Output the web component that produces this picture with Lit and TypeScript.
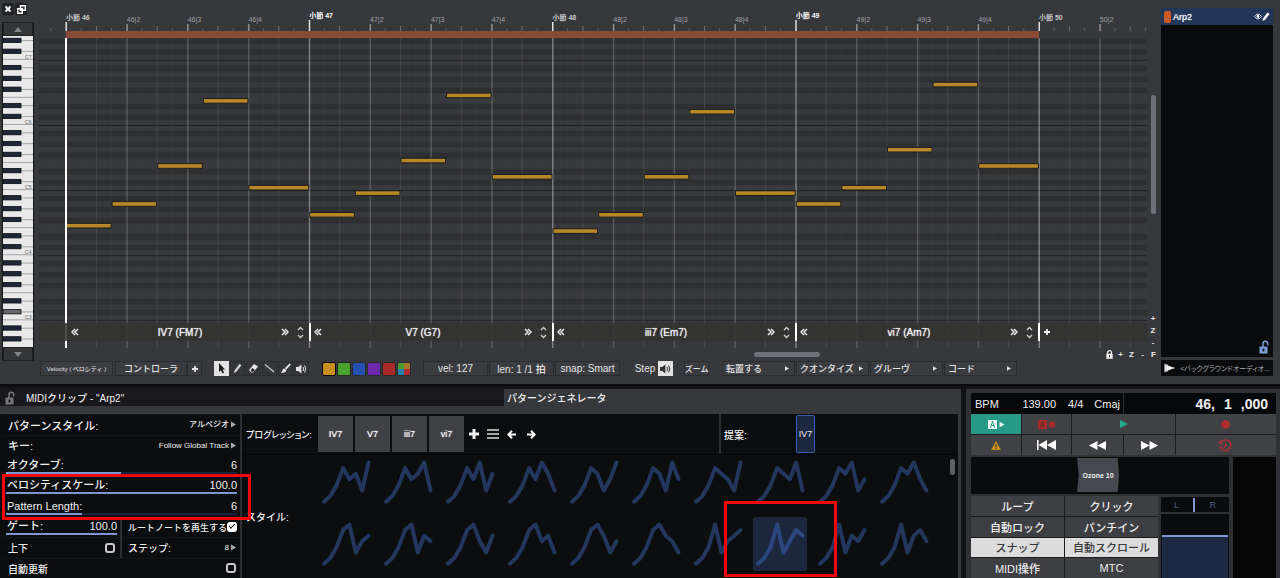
import { LitElement, html, svg, css, nothing } from "lit";
import { customElement, property, state } from "lit/decorators.js";
import { classMap } from "lit/directives/class-map.js";

const BEAT = 243.25 / 4;
const SIXTEENTH = BEAT / 4;
const BAR_X = 27;
const SEMI = 65.12 / 12;
const C5_BOTTOM = 190.6;
const BLACK = [1, 3, 6, 8, 10];
const isBlack = (n: number) => BLACK.includes(((n % 12) + 12) % 12);
const rowTop = (n: number) => C5_BOTTOM - (n + 1) * SEMI;

// Pitches are semitones relative to C5, five notes per bar.
const BARS = [
  [-7, -3, 4, 16, 0],
  [-5, -1, 5, 17, 2],
  [-8, -5, 2, 14, -1],
  [-3, 0, 7, 19, 4],
];
const CHORDS = ["IV7 (FM7)", "V7 (G7)", "iii7 (Em7)", "vi7 (Am7)"];

const STYLES = [
  "01364527", "01364572", "01364725", "01364752", "01365247",
  "01365274", "01365427", "01365472", "01365724", "01365742",
  "01367245", "01367254", "01367425", "01367452", "01367524",
  "01367542", "01372456", "01372465", "01372546", "01372564",
];

const base = css`
  :host { display: block; box-sizing: border-box; }
  *, *::before, *::after { box-sizing: border-box; }
  button, input, select {
    font: inherit; color: inherit; margin: 0; padding: 0; border: 0;
    border-radius: 0; background: none; appearance: none; outline: none;
  }
  button { display: flex; align-items: center; justify-content: center; white-space: nowrap; }
  svg { display: block; flex: none; }
`;

const openLock = (w: number, h: number) => html`<svg width=${w} height=${h} viewBox="0 0 10 14" aria-hidden="true">
  <path d="M4 7V3.6A2.3 2.3 0 0 1 8.7 3.6V5.2" fill="none" stroke="currentColor" stroke-width="1.5"/>
  <rect x="0.5" y="6.5" width="8" height="7" fill="currentColor"/>
  <rect x="3.6" y="8.6" width="1.8" height="2.8" fill="#0b0d0e"/></svg>`;
const triangle = html`<svg width="6" height="7" viewBox="0 0 6 7" aria-hidden="true"><path d="M0 0L6 3.5L0 7Z" fill="currentColor"/></svg>`;
const speaker = html`<svg width="11" height="10" viewBox="0 0 11 10" aria-hidden="true">
  <path d="M0 3H2.2L5.4 0.4V9.6L2.2 7H0Z" fill="currentColor"/>
  <path d="M7 3Q8.2 5 7 7M8.6 1.5Q10.8 5 8.6 8.5" fill="none" stroke="currentColor" stroke-width="1"/></svg>`;
const chevrons = (flip: boolean) => html`<svg width="8" height="8" viewBox="0 0 8 8" aria-hidden="true">
  <path d=${flip ? "M1 1L4 4L1 7M4 1L7 4L4 7" : "M4 1L1 4L4 7M7 1L4 4L7 7"} fill="none" stroke="#e8e8e8" stroke-width="1.5"/></svg>`;
const plus = (s: number) => html`<svg width=${s} height=${s} viewBox="0 0 10 10" aria-hidden="true"><path d="M5 0V10M0 5H10" stroke="currentColor" stroke-width="3"/></svg>`;

@customElement("piano-keys")
class PianoKeys extends LitElement {
  static styles = [base, css`
    :host { display: flex; flex-direction: column; background: #18191b; padding: 0 1px; }
    button { height: 14px; width: 100%; background: #343537; color: #85868a; border: 1px solid #1e1f20; }
    .name { font-size: 5px; fill: #666; }
    .keys { width: 100%; height: 311px; background: #e9e9ea; }
  `];
  render() {
    const keys = Array.from({ length: 62 }, (_, i) => i - 30);
    return html`
      <button aria-label="Scroll up"><svg width="8" height="5"><path d="M0 5L4 0L8 5Z" fill="currentColor"/></svg></button>
      <svg class="keys" aria-label="Keyboard"><g transform="translate(0,-37)">
        ${keys.map((n) => {
          const y = rowTop(n);
          const m = ((n % 12) + 12) % 12;
          return isBlack(n)
            ? svg`<rect x="0" y=${y + SEMI / 2 - 0.3} width="31" height="1" fill="#a5a5aa"/>
                <rect x="0" y=${y + 0.6} width="18" height="4.3" fill=${n === -23 ? "#66676a" : "#1f2638"} stroke="#0b0d12" stroke-width="0.8"/>`
            : m === 0 || m === 5
              ? svg`<rect x="0" y=${y + SEMI - 0.5} width="31" height="1" fill="#a5a5aa"/>
                ${m === 0 ? svg`<text class="name" x="22" y=${y + 4.6}>C${5 + n / 12}</text>` : nothing}`
              : nothing;
        })}
      </g></svg>
      <button aria-label="Scroll down"><svg width="8" height="5"><path d="M0 0L4 5L8 0Z" fill="currentColor"/></svg></button>`;
  }
}

@customElement("piano-roll")
class PianoRoll extends LitElement {
  static styles = [base, css`
    :host { position: relative; overflow: hidden; height: 348px; min-width: 0; }
    .canvas { width: 100%; height: 100%; }
    .bar { font-size: 7px; font-weight: 700; fill: #c9c9cb; }
    .bar.major { fill: #fff; }
    .beat { font-size: 7px; fill: #a0a1a5; }
    .strip {
      position: absolute; left: 0; right: 0; bottom: 7px; height: 18px; padding-left: 29px;
      display: flex; background: rgba(51, 51, 49, 0.85); color: #ededee; font-size: 10px;
    }
    .chord { width: 243px; display: flex; align-items: center; padding: 0 5px 0 3px; border-right: 2px solid #fff; }
    .chord span { flex: 1; text-align: center; text-shadow: 0 0 1px #fff; }
    .chord .step { margin-left: 8px; }
    .add { padding-left: 4px; }
  `];
  render() {
    const rows = Array.from({ length: 54 }, (_, i) => i - 24);
    const ticks = Array.from({ length: 74 }, (_, i) => i - 1);
    return html`
      <svg class="canvas" aria-label="Piano roll">
        <defs><clipPath id="area"><rect x="0" y="38" width="100%" height="283"/></clipPath></defs>
        <g clip-path="url(#area)">
          <rect y="38" width="100%" height="283" fill="#38393c"/>
          ${rows.map((n) => isBlack(n)
            ? svg`<rect y=${rowTop(n)} width="100%" height=${SEMI} fill="#2e2f31"/>`
            : n % 12 === 0
              ? svg`<rect y=${rowTop(n) + SEMI - 0.5} width="100%" height="1" fill="#1f2022"/>` : nothing)}
        </g>
        ${ticks.map((t) => {
          const x = BAR_X + t * SIXTEENTH;
          const bar = t % 16 === 0 && t <= 64;
          const beat = t % 4 === 0;
          const eighth = t % 2 === 0;
          const o = bar ? 0.36 : beat ? 0.18 : eighth ? 0.09 : 0.025;
          const top = bar ? (t % 32 ? 20 : 22) : beat ? 24 : eighth ? 26 : 28;
          return svg`
            <rect x=${x - 0.5} y="38" width=${beat ? 1.5 : 1} height="310" fill="#fff" opacity=${o}/>
            <rect x=${x - 0.5} y=${top} width=${beat ? 1.5 : 1} height=${31 - top} fill="#fff" opacity=${bar ? 0.85 : beat ? 0.45 : eighth ? 0.28 : 0.18}/>
            ${bar ? svg`<text class=${"bar" + (t % 32 ? " major" : "")} x=${x} y=${t % 32 ? 18 : 20}>小節 ${46 + t / 16}</text>`
              : beat && t < 72 ? svg`<text class="beat" x=${x} y="22">${46 + Math.floor(t / 16)}|${(t % 16) / 4 + 1}</text>` : nothing}`;
        })}
        <rect x=${BAR_X} y="31" width=${BEAT * 16} height="7" fill="#8a4a35"/>
        ${BARS.map((notes, b) => notes.map((n, i) => svg`
          <rect x=${BAR_X + (b * 16 + i * 3) * SIXTEENTH + 0.5} y=${rowTop(n) + 0.2}
            width=${(i === 4 ? 4 : 3) * SIXTEENTH - 1} height="4.6" fill="#b88827" stroke="#1c1d20" stroke-width="1"/>`))}
        <rect x="26" y="38" width="2" height="310" fill="#fff"/>
      </svg>
      <div class="strip">
        ${CHORDS.map((c) => html`<div class="chord">
          <button aria-label="Previous inversion">${chevrons(false)}</button>
          <span>${c}</span>
          <button aria-label="Next inversion">${chevrons(true)}</button>
          <button class="step" aria-label="Octave"><svg width="7" height="13" viewBox="0 0 7 13"><path d="M1 4L3.5 1.5L6 4M1 9L3.5 11.5L6 9" fill="none" stroke="#d0d0d0" stroke-width="1.3"/></svg></button>
        </div>`)}
        <button class="add" aria-label="Add chord">${plus(6)}</button>
      </div>`;
  }
}

const TOOLS = [
  { name: "Select", art: svg`<path d="M3 0V9L5 7.2L6.4 10.5L8 9.8L6.6 6.6H9Z" fill="#17181a"/>` },
  { name: "Draw", art: svg`<path d="M2 10L2.6 7.4L7.6 0.8L9.4 2.2L4.4 8.8Z" fill="#d5d5d7"/>` },
  { name: "Erase", art: svg`<path d="M1 7L6 1L10 3.6L5 9.6H3Z" fill="#e4e4e6"/><path d="M2.6 7.2L4.4 5L7 7L5 9H3.6Z" fill="#333437"/>` },
  { name: "Line", art: svg`<path d="M1 1.5L10 9" stroke="#c8c8ca" stroke-width="1.3"/>` },
  { name: "Paint", art: svg`<path d="M9.6 0.4L10.8 1.6L6.6 6.6L4.8 5.2Z" fill="#e4e4e6"/><path d="M4.4 5.4L6.4 7.2Q5.6 10.2 0.6 9.8Q2.4 8.8 2.4 7.2Q2.8 5.6 4.4 5.4Z" fill="#e4e4e6"/>` },
];
const SWATCHES = ["orange", "green", "blue", "purple", "red", "multi"];

@customElement("roll-toolbar")
class RollToolbar extends LitElement {
  @state() private tool = 0;
  @state() private color = 0;
  static styles = [base, css`
    :host { display: flex; align-items: stretch; height: 15px; font-size: 9px; font-weight: 500; color: #e2e2e4; padding-left: 38px; gap: 2px; }
    button { background: #3b3c3f; border: 1px solid #2c2d30; }
    .velocity { width: 73px; font-size: 6px; }
    .controller { width: 72px; }
    .plus { width: 15px; margin-left: -2px; }
    .group { display: flex; gap: 1px; }
    .tools { margin-left: 10px; }
    .tool { width: 15px; background: #35363a; }
    .tool.on { background: #e2e2e2; color: #333; border-color: #e2e2e2; }
    .colors { margin-left: 11px; align-items: center; }
    .swatch { width: 14px; height: 14px; border-radius: 2px; border: 1px solid #2a2b2d; }
    .swatch.on { border: 1px solid #000; }
    .orange { background: #c98d22; } .green { background: #47a52e; } .blue { background: #2551ae; }
    .purple { background: #6d28ab; } .red { background: #a92828; }
    .multi { background: conic-gradient(#a8762c 25%, #b12b2b 0 50%, #2a7fae 0 75%, #4c9d30 0); }
    .fields { margin-left: 10px; font-size: 10px; }
    .field { width: 65px; }
    .stepbox { margin-left: 10px; font-size: 10px; gap: 0; }
    .step { width: 26px; border: 0; background: none; }
    .zoom { margin-left: 9px; width: 25px; font-size: 8px; }
    .menus { margin-left: 11px; }
    .menu { width: 73px; justify-content: space-between; padding: 0 5px 0 3px; }
    .menu svg { width: 4px; height: 5px; }
    .controller, .velocity, .field { flex: none; }
  `];
  render() {
    return html`
      <button class="velocity">Velocity ( ベロシティ )</button>
      <button class="controller">コントローラ</button>
      <button class="plus" aria-label="Add controller">${plus(6)}</button>
      <div class="group tools">
        ${TOOLS.map((t, i) => html`<button class=${classMap({ tool: true, on: this.tool === i })} aria-label=${t.name}
          @click=${() => (this.tool = i)}><svg width="11" height="11">${t.art}</svg></button>`)}
        <button class="tool" aria-label="Audition">${speaker}</button>
      </div>
      <div class="group colors">
        ${SWATCHES.map((s, i) => html`<button class=${classMap({ swatch: true, [s]: true, on: this.color === i })}
          aria-label=${s} @click=${() => (this.color = i)}></button>`)}
      </div>
      <div class="group fields">
        <button class="field">vel: 127</button>
        <button class="field">len: 1 /1 拍</button>
        <button class="field">snap: Smart</button>
      </div>
      <div class="group stepbox">
        <button class="step">Step</button>
        <button class="tool on" aria-label="Step sound">${speaker}</button>
      </div>
      <button class="zoom">ズーム</button>
      <div class="group menus">
        ${["転置する", "クオンタイズ", "グルーヴ", "コード"].map((m) => html`<button class="menu">${m}${triangle}</button>`)}
      </div>`;
  }
}

@customElement("note-editor")
class NoteEditor extends LitElement {
  static styles = [base, css`
    :host {
      display: grid; grid-template-columns: minmax(0, 1fr) 112px; gap: 0 2px;
      padding: 0 7px 8px 2px; background: #37383b; border-bottom: 2px solid #0b0b0e; border-top: 1px solid #46474a;
      margin-top: -1px; color: #eee;
    }
    .main { display: grid; grid-template-columns: 32px minmax(0, 1fr) 12px; grid-template-rows: 348px 13px 15px; }
    .left { grid-row: 1 / 3; display: flex; flex-direction: column; }
    .window { height: 23px; display: flex; gap: 1px; padding: 3px 0 7px; }
    .window button { width: 12px; background: #222325; border-radius: 2px; }
    piano-keys { flex: 1; }
    piano-roll { margin-left: 5px; }
    .vertical { display: flex; flex-direction: column; align-items: center; padding-top: 95px; font-size: 8px; font-weight: 700; }
    .thumb { width: 5px; height: 119px; border-radius: 3px; background: #707178; margin-bottom: auto; }
    .vertical button, .horizontal button { height: 12px; min-width: 11px; }
    .horizontal { grid-column: 2 / 4; display: flex; align-items: center; font-size: 8px; font-weight: 700; }
    .hthumb { margin-left: auto; margin-right: 284px; width: 66px; height: 5px; border-radius: 3px; background: #707178; }
    roll-toolbar { grid-column: 1 / 4; }
    .side { padding-top: 8px; display: flex; flex-direction: column; gap: 3px; }
    .tracks { flex: 1; background: #0a0b0d; display: flex; flex-direction: column; }
    .track { height: 17px; background: #223659; display: flex; align-items: center; padding: 0 3px; font-size: 9px; text-shadow: 0 0 1px #fff; }
    .chip { width: 7px; height: 12px; border-radius: 2px; background: #cc5a24; margin-right: 2px; }
    .track .eye { margin-left: auto; }
    .lock { margin: auto 4px 3px auto; color: #7e9ad8; }
    .audio { height: 16px; background: #0a0b0d; color: #aaaaac; font-size: 7px; font-feature-settings: "palt"; display: flex; align-items: center; gap: 5px; padding: 0 3px; white-space: nowrap; }
    .audio span { margin-left: auto; }
  `];
  render() {
    return html`
      <div class="main">
        <div class="left">
          <div class="window">
            <button aria-label="Close"><svg width="8" height="8"><path d="M1.5 1.5L6.5 6.5M6.5 1.5L1.5 6.5" stroke="#fff" stroke-width="2"/></svg></button>
            <button aria-label="Detach"><svg width="9" height="9"><path d="M3.5 0.7H8.3V5.3H3.5ZM0.7 3.7H5.3V8.3H0.7Z" fill="#333" stroke="#fff" stroke-width="1.4"/></svg></button>
          </div>
          <piano-keys></piano-keys>
        </div>
        <piano-roll></piano-roll>
        <div class="vertical">
          <div class="thumb"></div>
          <button>+</button><button>Z</button><button>-</button>
        </div>
        <div class="horizontal">
          <div class="hthumb"></div>
          <button aria-label="Lock zoom"><svg width="7" height="9"><path d="M1.6 4V2.6A1.9 1.9 0 0 1 5.4 2.6V4" fill="none" stroke="#eee" stroke-width="1.2"/><rect x="0.3" y="3.8" width="6.4" height="5" fill="#eee"/><rect x="3" y="5.3" width="1" height="2" fill="#333"/></svg></button>
          <button>+</button><button>Z</button><button>-</button><button>F</button>
        </div>
        <roll-toolbar></roll-toolbar>
      </div>
      <aside class="side">
        <div class="tracks">
          <div class="track"><i class="chip"></i>Arp2
            <svg class="eye" width="8" height="7" viewBox="0 0 8 7"><path d="M0.4 3.5Q4 -1.4 7.6 3.5Q4 8.4 0.4 3.5Z" fill="none" stroke="#fff" stroke-width="0.8"/><circle cx="4" cy="3.5" r="1.4" fill="#fff"/></svg>
            <svg width="8" height="9" viewBox="0 0 8 9"><path d="M0.5 8.7L1 6.4L5.5 0.6L7.6 2L3 8Z" fill="#fff"/></svg>
          </div>
          <button class="lock" aria-label="Unlock tracks">${openLock(10, 14)}</button>
        </div>
        <div class="audio">
          <svg width="11" height="10" viewBox="0 0 10 10"><path d="M0 0L0.8 2L1.4 0.5L2.2 2L3 1.2L3.6 3L4.4 2.2L5 3.4L5.8 3L7 4L10 4.6V5.4L7 6L5.8 7L5 6.6L4.4 7.8L3.6 7L3 8.8L2.2 8L1.4 9.5L0.8 8L0 10Z" fill="#eee"/></svg>
          <span>&lt;バックグラウンドオーディオ...</span>
        </div>
      </aside>`;
  }
}

@customElement("slider-row")
class SliderRow extends LitElement {
  @property() label = "";
  @property() text = "";
  @property({ type: Number }) value = 50;
  static styles = [base, css`
    :host { display: flex; flex-direction: column; justify-content: flex-end; padding-bottom: 2px; }
    .line { display: flex; justify-content: space-between; align-items: center; line-height: 14px; white-space: nowrap; }
    .line label { padding-left: 1px; }
    input { width: 100%; height: 2px; display: block; background: linear-gradient(to right, #7e97d2 var(--fill), #16233c 0); }
    input::-webkit-slider-thumb { appearance: none; width: 1px; height: 2px; }
  `];
  render() {
    return html`
      <div class="line"><label for="range">${this.label}</label><output for="range">${this.text}</output></div>
      <input id="range" type="range" .value=${String(this.value)} style=${`--fill:${this.value}%`}>`;
  }
}

@customElement("pattern-settings")
class PatternSettings extends LitElement {
  static styles = [base, css`
    :host { display: grid; grid-template-rows: repeat(8, 1fr); font-size: 11px; font-weight: 500; position: relative; min-height: 164px; }
    .row { display: flex; align-items: center; padding: 0 4px 0 6px; border-top: 1px solid #131517; min-width: 0; white-space: nowrap; }
    .row label { flex: 1; }
    select { text-align-last: right; font-size: 8px; margin-right: 2px; height: 12px; }
    .row svg { color: #a9aaac; width: 5px; }
    slider-row { margin: 0 3px 0 4px; }
    .pair { display: grid; grid-template-columns: 118px 2px 1fr; }
    .pair slider-row { margin-right: 3px; }
    .pair .row { padding-right: 5px; }
    .pair .rule { background: #2d2e31; }
    .pair .right { padding: 0 4px 0 6px; }
    .small { font-size: 9px; }
    .stepname { font-size: 10px; }
    input[type="checkbox"] { width: 10px; height: 10px; border: 2px solid #c9c9cb; border-radius: 3px; position: relative; flex: none; }
    input[type="checkbox"]:checked { background: #fff; border-color: #fff; }
    input[type="checkbox"]:checked::after {
      content: ""; position: absolute; left: 0; top: 0; width: 6px; height: 3px;
      border-left: 1px solid #111; border-bottom: 1px solid #111; transform: rotate(-45deg);
    }
    .mark { grid-column: 1; grid-row: 4 / 6; position: absolute; inset: -2px -11px -3px 0; border: 3px solid #f00808; pointer-events: none; z-index: 2; }
  `];
  render() {
    return html`
      <div class="row"><label for="style">パターンスタイル:</label><select id="style"><option>アルペジオ</option></select>${triangle}</div>
      <div class="row"><label for="key">キー:</label><select id="key"><option>Follow Global Track</option></select>${triangle}</div>
      <slider-row label="オクターブ:" text="6" .value=${50}></slider-row>
      <slider-row label="ベロシティスケール:" text="100.0" .value=${100}></slider-row>
      <slider-row label="Pattern Length:" text="6" .value=${33}></slider-row>
      <div class="pair">
        <slider-row label="ゲート:" text="100.0" .value=${100}></slider-row>
        <i class="rule"></i>
        <div class="row right small"><label for="root">ルートノートを再生する</label><input id="root" type="checkbox" checked></div>
      </div>
      <div class="pair">
        <div class="row stepname"><label for="updown">上下</label><input id="updown" type="checkbox"></div>
        <i class="rule"></i>
        <div class="row right stepname"><label for="step">ステップ:</label><select id="step"><option>8</option></select>${triangle}</div>
      </div>
      <div class="row stepname"><label for="auto">自動更新</label><input id="auto" type="checkbox"></div>
      <div class="mark"></div>`;
  }
}

@customElement("pattern-browser")
class PatternBrowser extends LitElement {
  @state() private selected = 17;
  static styles = [base, css`
    :host { display: grid; grid-template-rows: 41px 1fr; border-left: 2px solid #2d2e31; border-right: 3px solid #37383b; font-weight: 500; }
    .top { display: flex; border-bottom: 1px solid #050606; }
    .progression { width: 477px; display: flex; align-items: center; padding-left: 4px; }
    .caption { width: 72px; font-size: 9px; white-space: nowrap; font-feature-settings: "palt"; }
    .chords { display: flex; gap: 2px; }
    .chord { width: 35px; height: 36px; background: #404145; font-size: 9px; text-shadow: 0 0 1px #fff; }
    .icon { width: 19px; height: 20px; }
    .suggest { flex: 1; display: flex; align-items: center; border-left: 2px solid #2d2e31; padding-left: 3px; font-size: 10px; }
    .suggest span { width: 72px; }
    .pick { width: 19px; height: 38px; background: #1c2740; border: 1px solid #3a5fa8; border-radius: 2px; font-size: 9px; }
    .styles { display: grid; grid-template-columns: 77px 1fr 8px; min-height: 0; }
    .name { font-size: 10px; padding-left: 4px; align-self: center; }
    .grid { display: grid; grid-template-columns: repeat(auto-fill, 54px); grid-auto-rows: 54px; gap: 8px; align-content: start; }
    .cell { border-radius: 3px; position: relative; }
    .cell.on { background: #1c273d; }
    .curve { fill: none; stroke: #22365e; stroke-width: 4; stroke-linecap: round; stroke-linejoin: round; }
    .on .curve { stroke: #2c477e; }
    .mark { position: absolute; inset: -16px -30px -6px -29px; border: 3px solid #f00808; z-index: 2; pointer-events: none; }
    .bar { width: 5px; height: 16px; margin-top: 4px; border-radius: 3px; background: #606166; }
  `];
  render() {
    return html`
      <div class="top">
        <div class="progression">
          <span class="caption">プログレッション:</span>
          <div class="chords">${["IV7", "V7", "iii7", "vi7"].map((c) => html`<button class="chord">${c}</button>`)}</div>
          <button class="icon" aria-label="Add">${plus(10)}</button>
          <button class="icon" aria-label="Menu"><svg width="12" height="10"><path d="M0 1H12M0 5H12M0 9H12" stroke="#ddd" stroke-width="1.6"/></svg></button>
          <button class="icon" aria-label="Back"><svg width="10" height="9"><path d="M5 0.8L1.4 4.5L5 8.2M1.4 4.5H9" fill="none" stroke="#fff" stroke-width="2"/></svg></button>
          <button class="icon" aria-label="Forward"><svg width="10" height="9"><path d="M5 0.8L8.6 4.5L5 8.2M8.6 4.5H1" fill="none" stroke="#fff" stroke-width="2"/></svg></button>
        </div>
        <div class="suggest"><span>提案:</span><button class="pick">IV7</button></div>
      </div>
      <div class="styles">
        <span class="name">スタイル:</span>
        <div class="grid">
          ${STYLES.map((s, i) => html`<button class=${classMap({ cell: true, on: i === this.selected })} aria-label=${`Style ${i + 1}`}
            @click=${() => (this.selected = i)}>
            <svg width="54" height="54"><polyline class="curve" points=${[...s].map((l, k) => `${5 + k * 6.36},${46.7 - Number(l) * 5.6}`).join(" ")}/></svg>
            ${i === this.selected ? html`<i class="mark"></i>` : nothing}
          </button>`)}
        </div>
        <i class="bar"></i>
      </div>`;
  }
}

@customElement("transport-panel")
class TransportPanel extends LitElement {
  @state() private on = ["スナップ", "自動スクロール"];
  static styles = [base, css`
    :host { background: #303134; padding: 4px 4px 0 5px; display: flex; flex-direction: column; font-size: 11px; font-weight: 500; }
    .display { display: grid; grid-template-columns: 1fr 1fr; gap: 1px; height: 21px; }
    .lcd { background: #070809; display: flex; align-items: center; padding: 0 3px 0 4px; }
    .lcd .tempo { margin-left: auto; margin-right: 12px; }
    .lcd .meter { margin-right: 11px; }
    .lcd.position { font-size: 14px; font-weight: 700; justify-content: flex-end; padding-right: 8px; gap: 9px; }
    .transport { display: grid; grid-template-columns: 51fr 50fr 52fr 51fr 102fr; grid-auto-rows: 20px; gap: 1px; background: #1b1c1e; margin-bottom: 2px; }
    .transport button { background: #414246; }
    .transport .auto { background: #269a85; color: #e9f5f2; }
    .wide { grid-column: span 2; }
    .lower { flex: 1; display: grid; grid-template-columns: 1fr 43px; gap: 4px; }
    .left { display: grid; grid-template-rows: 37px 1fr; gap: 2px; }
    .slots { background: #0a0b0d; display: flex; justify-content: center; align-items: flex-start; padding: 1px 4px 0 0; }
    .plugin { width: 42px; height: 34px; background: #454850; font-size: 7px; font-weight: 700; clip-path: polygon(0 0, 97% 0, 100% 50%, 97% 100%, 0 100%, 4% 50%); }
    .controls { display: grid; grid-template-columns: 1fr 68px; gap: 3px; }
    .modes { display: grid; grid-template-columns: 1fr 1fr; grid-template-rows: repeat(4, 1fr); gap: 1px; background: #1b1c1e; }
    .modes button { background: #3e3f43; }
    .modes .on { background: #dcdcdc; color: #3a3a3c; }
    .mixer { display: grid; grid-template-rows: 15px 1fr; gap: 2px; padding-top: 1px; }
    .pan { background: #0a0b0d; color: #4a5c85; font-size: 9px; display: flex; align-items: center; justify-content: space-around; padding: 0 6px; }
    .pan i { width: 2px; height: 14px; background: #7e97d2; }
    .fader { background: #0a0b0d; padding: 21px 1px 0; display: flex; }
    .fill { flex: 1; background: #1c2942; border-top: 2px solid #7e97d2; }
    .level { background: #060607; }
  `];
  private toggle(m: string) {
    this.on = this.on.includes(m) ? this.on.filter((x) => x !== m) : [...this.on, m];
  }
  render() {
    return html`
      <div class="display">
        <div class="lcd"><span>BPM</span><span class="tempo">139.00</span><span class="meter">4/4</span><span>Cmaj</span></div>
        <div class="lcd position"><span>46,</span><span>1</span><span>,000</span></div>
      </div>
      <div class="transport">
        <button class="auto" aria-label="Automation read"><svg width="17" height="9"><rect width="9" height="9" fill="currentColor"/><path d="M2.5 7.5L4.5 1.5L6.5 7.5M3.2 5.5H5.8" fill="none" stroke="#269a85"/><path d="M11.5 1.5L16.5 4.5L11.5 7.5Z" fill="currentColor"/></svg></button>
        <button aria-label="Automation write"><svg width="18" height="9"><rect width="9" height="9" fill="#a82a2a"/><path d="M2.5 7.5L4.5 1.5L6.5 7.5M3.2 5.5H5.8" fill="none" stroke="#5c2a2c"/><circle cx="14" cy="4.5" r="3.2" fill="#a82a2a"/></svg></button>
        <button class="wide" aria-label="Play"><svg width="8" height="8"><path d="M0 0L8 4L0 8Z" fill="#2aa88f"/></svg></button>
        <button aria-label="Record"><svg width="9" height="9"><circle cx="4.5" cy="4.5" r="4.2" fill="#b52c2c"/></svg></button>
        <button aria-label="Warnings"><svg width="10" height="9"><path d="M5 0L10 9H0Z" fill="#c98d22"/><path d="M5 3V6M5 7V8" stroke="#333" stroke-width="1.2"/></svg></button>
        <button aria-label="To start"><svg width="19" height="10"><path d="M0 0H1.6V10H0ZM10 0V10L1.6 5ZM19 0V10L10 5Z" fill="#fff"/></svg></button>
        <button aria-label="Rewind"><svg width="17" height="9"><path d="M8.5 0V9L0 4.5ZM17 0V9L8.5 4.5Z" fill="#fff"/></svg></button>
        <button aria-label="Fast forward"><svg width="17" height="9"><path d="M0 0V9L8.5 4.5ZM8.5 0V9L17 4.5Z" fill="#fff"/></svg></button>
        <button aria-label="History record"><svg width="13" height="13"><path d="M2 3.2A5.4 5.4 0 1 1 1.1 7M1 1.6V4.6H4M6.6 3.6V7L4.6 8.6" fill="none" stroke="#b52c2c" stroke-width="1.4"/></svg></button>
      </div>
      <div class="lower">
        <div class="left">
          <div class="slots"><button class="plugin">Ozone 10</button></div>
          <div class="controls">
            <div class="modes">
              ${["ループ", "クリック", "自動ロック", "パンチイン", "スナップ", "自動スクロール", "MIDI操作", "MTC"].map((m) => html`
                <button class=${classMap({ on: this.on.includes(m) })} @click=${() => this.toggle(m)}>${m}</button>`)}
            </div>
            <div class="mixer">
              <div class="pan"><span>L</span><i></i><span>R</span></div>
              <div class="fader"><i class="fill"></i></div>
            </div>
          </div>
        </div>
        <div class="level"></div>
      </div>`;
  }
}

@customElement("app-root")
class AppRoot extends LitElement {
  static styles = [base, css`
    :host {
      display: flex; flex-direction: column; min-height: 100vh; background: #111316; color: #eeeeef; overflow: hidden;
      font-family: "Liberation Sans", "Noto Sans CJK JP", sans-serif;
    }
    .bottom { flex: 1; display: grid; grid-template-columns: minmax(0, 1fr) 314px; gap: 5px; padding-top: 3px; }
    .clip { display: flex; flex-direction: column; background: #0b0d0e; min-width: 0; }
    .tabs { display: flex; height: 17px; font-size: 10px; font-weight: 500; background: #37383b; }
    .title { width: 504px; background: #19191b; display: flex; align-items: center; gap: 11px; padding-left: 5px; }
    .title svg { color: #77787b; }
    .tab { padding: 0 3px; }
    .panes { flex: 1; display: grid; grid-template-columns: 238px minmax(0, 1fr); border-top: 8px solid #37383b; padding-left: 2px; }
  `];
  render() {
    return html`
      <note-editor></note-editor>
      <div class="bottom">
        <section class="clip">
          <div class="tabs">
            <div class="title">${openLock(10, 14)}<span>MIDIクリップ - "Arp2"</span></div>
            <button class="tab">パターンジェネレータ</button>
          </div>
          <div class="panes">
            <pattern-settings></pattern-settings>
            <pattern-browser></pattern-browser>
          </div>
        </section>
        <transport-panel></transport-panel>
      </div>`;
  }
}
